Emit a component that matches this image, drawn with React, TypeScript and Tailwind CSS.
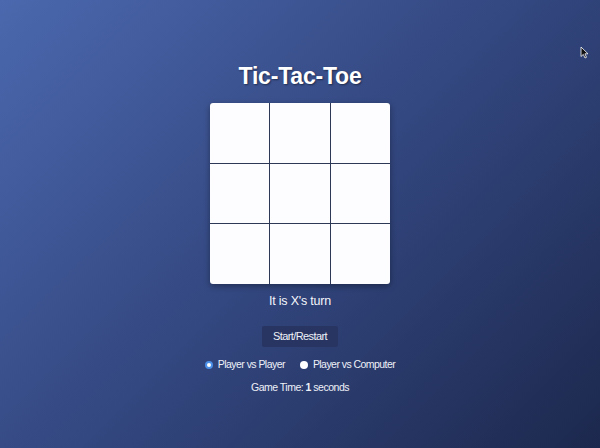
import React from "react";

export default function App() {
  const cells = Array.from({ length: 9 });
  return (
    <div
      className="relative w-[600px] h-[448px] overflow-hidden flex flex-col items-center bg-[linear-gradient(135deg,#4b68ae_0%,#334780_50%,#1c284d_100%)] text-white"
      style={{ fontFamily: '"Liberation Sans", Arial, sans-serif' }}
    >
      <h1 className="mt-[62px] h-[28px] leading-[28px] text-[23px] font-bold tracking-[-0.2px] [text-shadow:1px_1px_2px_rgba(0,0,0,0.45)]">
        Tic-Tac-Toe
      </h1>
      <div className="mt-[13px] w-[180px] h-[181px] grid grid-cols-3 grid-rows-3 gap-px bg-[#2c3855] rounded-[3px] overflow-hidden shadow-[0_2px_6px_rgba(0,0,0,0.35)]">
        {cells.map((_, i) => (
          <div key={i} className="bg-[#fdfdff]" />
        ))}
      </div>
      <div className="mt-[9px] h-[16px] leading-[16px] text-[12.5px] tracking-[-0.2px] text-[#f4f6fb]">
        It is X's turn
      </div>
      <button className="mt-[17px] w-[76px] h-[21px] bg-[#283562] rounded-[2px] text-[11px] tracking-[-0.6px] text-[#eef1f8] leading-[21px]">
        Start/Restart
      </button>
      <div className="mt-[11px] h-[14px] flex items-center text-[10.5px] tracking-[-0.55px] text-[#eef1f8]">
        <span className="w-[8px] h-[8px] rounded-full border-[2px] border-[#4b8fe8] bg-white" />
        <span className="ml-[5px]">Player vs Player</span>
        <span className="ml-[15px] w-[8px] h-[8px] rounded-full bg-white" />
        <span className="ml-[5px]">Player vs Computer</span>
      </div>
      <div className="mt-[8px] h-[14px] leading-[14px] text-[10.5px] tracking-[-0.5px] text-[#eef1f8]">
        Game Time: <b>1</b> seconds
      </div>
      <svg
        className="absolute left-[580px] top-[46px]"
        width="9"
        height="13"
        viewBox="0 0 9 13"
      >
        <path
          d="M1 1 L1 10.5 L3.3 8.4 L5 12 L6.5 11.3 L4.9 7.8 L8 7.8 Z"
          fill="#111"
          stroke="#fff"
          strokeWidth="0.8"
        />
      </svg>
    </div>
  );
}
